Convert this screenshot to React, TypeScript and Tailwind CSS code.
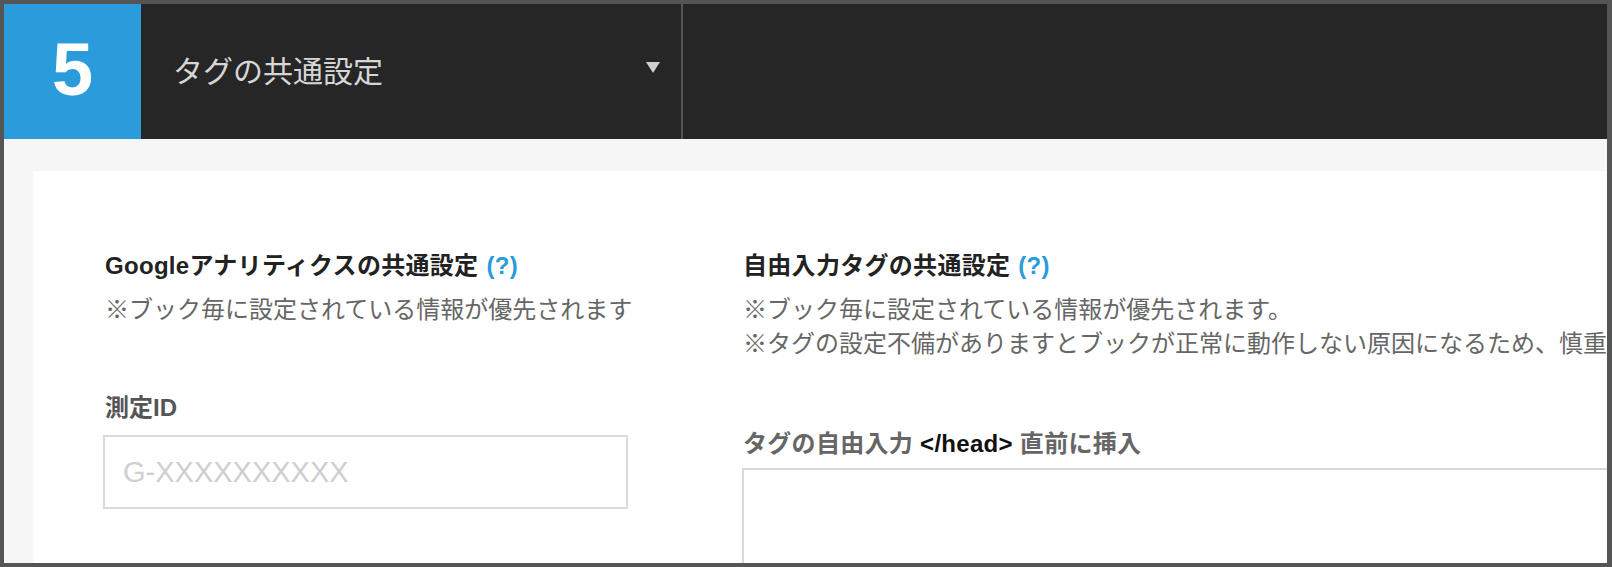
const FONT = "font-['Liberation_Sans','Noto_Sans_CJK_JP',sans-serif]";

const Help = () => <span className="ml-2 text-[#2a9cdb]">(?)</span>;

const App = () => {
  return (
    <div className={`w-[1612px] h-[567px] overflow-hidden bg-[#555] pt-1 pl-1 pr-[5px] pb-1 ${FONT}`}>
      <div className="flex flex-col h-full overflow-hidden">
        {/* header */}
        <div className="flex h-[135px] shrink-0 bg-[#262626]">
          <div className="w-[137px] flex items-center justify-center bg-[#2a9cdb] pb-1 text-white text-[74px] font-bold leading-none">
            5
          </div>
          <div className="w-[542px] flex items-center pl-8 pr-5 border-r-2 border-[#555]">
            <span className="text-[30px] leading-none text-[#d6d6d6]">タグの共通設定</span>
            <svg className="ml-auto mb-2" width="16" height="13" viewBox="0 0 16 13">
              <polygon points="1,1 15,1 8,12" fill="#cfcfcf" />
            </svg>
          </div>
          <div className="flex-1" />
        </div>

        {/* body */}
        <div className="flex-1 min-h-0 bg-[#f6f6f6] pt-8 pl-[29px]">
          <div className="h-full bg-white flex pl-[70px] pt-[78px] overflow-hidden">
            {/* left column */}
            <div className="w-[525px] shrink-0">
              <h3 className="pl-[2px] text-[24px] leading-[34px] font-bold tracking-[0.3px] text-[#222]">
                Googleアナリティクスの共通設定<Help />
              </h3>
              <p className="pl-[2px] mt-[10px] text-[24px] leading-[34px] text-[#666] whitespace-nowrap">
                ※ブック毎に設定されている情報が優先されます
              </p>
              <p className="pl-[2px] mt-[64px] text-[24px] leading-[34px] font-bold text-[#555]">測定ID</p>
              <input
                type="text"
                placeholder="G-XXXXXXXXXX"
                className="mt-[10px] w-full h-[74px] border-2 border-[#d9d9d9] pl-[18px] text-[29px] text-[#333] placeholder:text-[#cfcfcf] outline-none"
              />
            </div>

            {/* right column */}
            <div className="ml-[112px] shrink-0">
              <h3 className="pl-[3px] text-[24px] leading-[34px] font-bold tracking-[0.3px] text-[#222]">
                自由入力タグの共通設定<Help />
              </h3>
              <div className="pl-[3px] mt-[10px] text-[24px] leading-[34px] text-[#666] whitespace-nowrap">
                <p>※ブック毎に設定されている情報が優先されます。</p>
                <p>※タグの設定不備がありますとブックが正常に動作しない原因になるため、慎重に設定してください。</p>
              </div>
              <p className="pl-[3px] mt-[66px] text-[24px] leading-[34px] font-bold tracking-[0.3px] text-[#666] whitespace-nowrap">
                タグの自由入力 <span className="text-[#111]">&lt;/head&gt;</span> 直前に挿入
              </p>
              <textarea className="mt-[7px] ml-[2px] block w-[900px] h-[140px] border-2 border-[#d9d9d9] resize-none outline-none" />
            </div>
          </div>
        </div>
      </div>
    </div>
  );
};

export default App;
